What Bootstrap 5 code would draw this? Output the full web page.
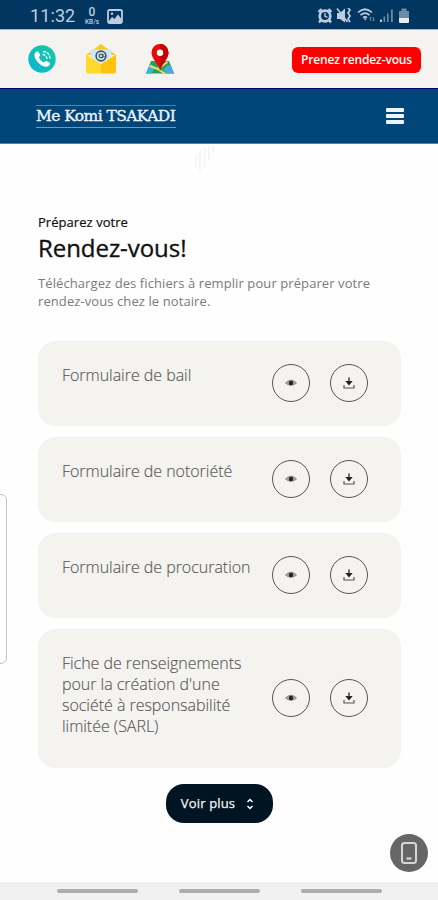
<!DOCTYPE html>
<html lang="fr">
<head>
<meta charset="utf-8">
<meta name="viewport" content="width=device-width, initial-scale=1">
<title>Me Komi TSAKADI</title>
<link href="https://cdn.jsdelivr.net/npm/bootstrap@5.3.0/dist/css/bootstrap.min.css" rel="stylesheet">
<style>
body{font-family:"Open Sans","Noto Sans",sans-serif;height:900px;overflow:hidden;background:#fefefe;color:#111}
svg{display:block;flex:none}
.status-strip{height:29px;background:#00365f;color:#bfcde0;font-family:Roboto,sans-serif;padding:3px 28px 0 30px}
.clock{font-size:18px;line-height:24px;width:46px;letter-spacing:.1px;white-space:nowrap}
.speed{font-size:12px;line-height:12px;width:18px;margin-left:7px;font-weight:500}
.speed span{display:block;font-size:6.5px;line-height:8px}
.contact-strip{height:59px;background:#f4f3f0;padding:0 17px 0 28px;border-top:1px solid #a9b4bf}
.btn-rdv{background:#fe0000;color:#fff;width:129px;height:26px;border-radius:6px;font-size:12px;font-weight:600;line-height:26px;letter-spacing:-.15px;margin-top:1px}
.brand-strip{height:56px;background:#004679;border-top:1px solid #000070;border-bottom:1px solid #55809f;padding:0 34px 0 36px}
.brand-name{font-family:"DejaVu Serif","Liberation Serif",serif;font-size:15.5px;line-height:21px;height:23px;width:140px;color:#eff4fc;border-top:1px solid #547fa6;border-bottom:1px solid #7395b6;white-space:nowrap;letter-spacing:-.58px;-webkit-text-stroke:.35px #eff4fc}
.burger{width:18px}
.burger span{display:block;height:4px;background:#eef3f8;border-radius:1px;margin-bottom:2px}
.content{padding:68px 37px 0 38px}
.pre{font-size:13px;line-height:20px;-webkit-text-stroke:.2px #111;letter-spacing:.05px}
.headline{font-size:24px;line-height:32px;font-weight:500;letter-spacing:-.05px;-webkit-text-stroke:.35px #111}
.intro{font-size:13px;line-height:18px;color:#7a7a7a;margin-top:10px;white-space:nowrap;letter-spacing:.09px}
.files{margin-top:31px;gap:11px}
.file-item{min-height:85px;border-radius:18px;background:#f4f3f0;padding:23px 33px 24px 24px}
.file-tall{min-height:139px}
.file-name{font-size:16px;line-height:21px;color:#555;font-weight:300;white-space:nowrap;padding-top:1px;letter-spacing:-.03px;-webkit-text-stroke:.15px #666}
.rounded-btn{width:38px;height:38px;border:1px solid #555;background:transparent}
.btn-more{width:107px;height:39px;border-radius:18px;background:#001421;color:#f1f4f6;font-size:13px;letter-spacing:.15px;-webkit-text-stroke:.25px #f1f4f6;margin:16px auto 0;gap:11px}
.edge-handle{left:-6px;top:494px;width:13px;height:170px;border:1px solid #c4c4c4;border-radius:6px}
.device-btn{left:390px;top:834px;width:38px;height:38px;background:#666}
.nav-strip{height:18px;background:#f1f1f1;gap:41px;padding:0}
.nav-strip span{width:81px;height:4px;border-radius:2px;background:#adadad}
.streaks{left:194px;top:145px}
</style>
</head>
<body class="position-relative d-flex flex-column">
<svg width="0" height="0" class="position-absolute">
<symbol id="eye" viewBox="0 0 12 10"><path d="M.5 5Q6-.6 11.5 5 6 9.6.5 5Z" fill="#aaa" stroke="#777" stroke-width=".8"/><circle cx="6" cy="5" r="2.200" fill="#222"/></symbol>
<symbol id="down" viewBox="0 0 12 12"><path d="M1 8v3h10V8" fill="none" stroke="#555" stroke-width="1.200"/><path d="M6 .5v4.500" stroke="#555" stroke-width="1.700"/><path d="M2.300 4h7.400L6 8.600Z" fill="#222"/></symbol>
</svg>
<header>
<div class="status-strip d-flex align-items-center">
<span class="clock">11:32</span>
<div class="speed text-center">0<span>KB/s</span></div>
<svg width="16" height="15" viewBox="0 0 16 15" style="margin-left:6px"><rect x="1" y="1" width="14" height="13" rx="1.500" fill="none" stroke="#bfcde0" stroke-width="1.800"/><circle cx="5" cy="4.800" r="1.200" fill="#bfcde0"/><path d="M2 12l3-4 2.500 2L11 5.500l3 4V13H2Z" fill="#bfcde0"/></svg>
<div class="ms-auto d-flex align-items-center">
<svg width="93" height="17" viewBox="317 8 93 17">
<g fill="none" stroke="#bfcde0"><circle cx="325" cy="16" r="5.300" stroke-width="2.700"/><path d="M325 13v3.300l2.500 1" stroke-width="1.400"/><path d="M318.500 12l3-3M331.500 12l-3-3M321 20l-2 2.500M329 20l2 2.500" stroke-width="2.400"/></g>
<path d="M337 13h3l5-4.500v14L340 19h-3Z" fill="#bfcde0"/><path d="M337 8.500l10.500 13.500" stroke="#bfcde0" stroke-width="1.600"/><path d="M348 8l2 2-2 3 2 3-2 3 2 3" fill="none" stroke="#bfcde0" stroke-width="1.700"/>
<g fill="none" stroke="#bfcde0" stroke-width="1.700"><path d="M358 12.500q7-6.500 14 0M360.500 15.200q4.500-4 9 0M363 17.600q2-1.500 4 0"/></g><path d="M363.500 18.500h3.500l-1.700 2Z" fill="#bfcde0"/><path d="M370.500 21v-4m-1.200 1.300L370.500 17l1.200 1.300M373.500 17v4m-1.200-1.300 1.200 1.300 1.200-1.300" fill="none" stroke="#7891aa" stroke-width=".8"/>
<g fill="#6f8aa6"><path d="M380 19.500h2V22h-2Z" fill="#bfcde0"/><path d="M383.500 16.500h1.600V22h-1.600ZM387 13.500h1.600V22H387ZM391 9.500h1.800V22H391Z"/></g>
<path d="M399 11h2.500V8.500h5V11h2.500v7h-10Z" fill="#6f8aa6"/><path d="M399 18h10v4q0 1-1 1h-8q-1 0-1-1Z" fill="#e4ebf2"/>
</svg>
</div>
</div>
<div class="contact-strip d-flex align-items-center">
<svg width="28" height="28" viewBox="0 0 28 28"><defs><linearGradient id="teal" x1="0" y1="1" x2="1" y2="0"><stop stop-color="#08b5d4"/><stop offset="1" stop-color="#15c9a0"/></linearGradient></defs><circle cx="14" cy="14" r="13.700" fill="url(#teal)"/><path d="M7.500 7.500c1.500-1.700 2.500-1.500 3.300 0l1.200 2c.6 1.100-.8 2-1 3 .9 2.300 2.500 3.900 4.700 4.700 1.200-.2 1.900-1.700 3-1.100l2.500 1.500c1.500.9.900 2.100-.3 3.200-2.200 2-6.300.8-9.700-2.300-3.700-3.500-6.200-8.400-3.700-11Z" fill="#fff"/><path d="M14.500 9.500q4 0 4.500 4.500M15 6.500q6.500.5 7 7" fill="none" stroke="#d9fff6" stroke-width="1.500" stroke-dasharray="3 1"/></svg>
<svg width="30" height="30" viewBox="0 0 30 30" style="margin-left:30px"><path d="M0 11L15 0l15 11Z" fill="#ffc91b"/><path d="M0 10.500l15 9.500v9.500H2q-2 0-2-2Z" fill="#ffd92e"/><path d="M30 10.500L15 20v9.500h13q2 0 2-2Z" fill="#ffc20e"/><path d="M4.500 5.500h21V13L15 19.500 4.500 13Z" fill="#cfe7f0"/><circle cx="15" cy="12" r="4.900" fill="none" stroke="#405767" stroke-width="1.600"/><circle cx="15" cy="12" r="1.800" fill="none" stroke="#405767" stroke-width="1.300"/><path d="M17 10v2.500q1 1.500 2 0" fill="none" stroke="#405767"/></svg>
<svg width="28" height="30" viewBox="0 0 28 30" style="margin-left:30px"><path d="M5 17h18l5 12.500H0Z" fill="#23a35a"/><path d="M4 20l6 3-5 6.500H0Z" fill="#3bb4dd"/><path d="M22 21l3 1 3 7.500h-7l-4-4Z" fill="#4ba8df"/><path d="M3.500 22l8 3 10-7M10 24l9 5.500" fill="none" stroke="#f3dc60" stroke-width="2"/><path d="M14 27C13 20 5.500 15.500 5.500 8.500a8.500 8.500 0 0 1 17 0C22.500 15.500 15 20 14 27Z" fill="#e30b0b"/><path d="M14 0a8.500 8.500 0 0 1 8.500 8.500C22.500 15.500 15 20 14 27Z" fill="#c90008"/><circle cx="14" cy="8.700" r="3.200" fill="#fff"/></svg>
<button class="btn btn-rdv p-0 ms-auto border-0">Prenez rendez-vous</button>
</div>
<nav class="brand-strip d-flex align-items-center justify-content-between">
<div class="brand-name">Me Komi TSAKADI</div>
<div class="burger"><span></span><span></span><span class="mb-0"></span></div>
</nav>
</header>
<main class="content flex-grow-1">
<div class="pre">Préparez votre</div>
<h1 class="headline mb-0">Rendez-vous!</h1>
<p class="intro mb-0">Téléchargez des fichiers à remplir pour préparer votre<br>rendez-vous chez le notaire.</p>
<div class="files d-flex flex-column">
<div class="file-item d-flex justify-content-between"><div class="file-name">Formulaire de bail</div><div class="d-flex align-items-center align-self-center"><button class="rounded-btn rounded-circle d-flex align-items-center justify-content-center p-0 me-3"><svg width="12" height="10"><use href="#eye"/></svg></button><button class="rounded-btn rounded-circle d-flex align-items-center justify-content-center p-0 ms-1"><svg width="12" height="12"><use href="#down"/></svg></button></div></div>
<div class="file-item d-flex justify-content-between"><div class="file-name">Formulaire de notoriété</div><div class="d-flex align-items-center align-self-center"><button class="rounded-btn rounded-circle d-flex align-items-center justify-content-center p-0 me-3"><svg width="12" height="10"><use href="#eye"/></svg></button><button class="rounded-btn rounded-circle d-flex align-items-center justify-content-center p-0 ms-1"><svg width="12" height="12"><use href="#down"/></svg></button></div></div>
<div class="file-item d-flex justify-content-between"><div class="file-name">Formulaire de procuration</div><div class="d-flex align-items-center align-self-center"><button class="rounded-btn rounded-circle d-flex align-items-center justify-content-center p-0 me-3"><svg width="12" height="10"><use href="#eye"/></svg></button><button class="rounded-btn rounded-circle d-flex align-items-center justify-content-center p-0 ms-1"><svg width="12" height="12"><use href="#down"/></svg></button></div></div>
<div class="file-item file-tall d-flex justify-content-between"><div class="file-name">Fiche de renseignements<br>pour la création d'une<br>société à responsabilité<br>limitée (SARL)</div><div class="d-flex align-items-center align-self-center"><button class="rounded-btn rounded-circle d-flex align-items-center justify-content-center p-0 me-3"><svg width="12" height="10"><use href="#eye"/></svg></button><button class="rounded-btn rounded-circle d-flex align-items-center justify-content-center p-0 ms-1"><svg width="12" height="12"><use href="#down"/></svg></button></div></div>
</div>
<button class="btn btn-more border-0 py-0 ps-0 pe-1 d-flex align-items-center justify-content-center">Voir plus<svg width="8" height="12" viewBox="0 0 8 12"><path d="M1.500 4L4 1.500 6.500 4M1.500 8L4 10.500 6.500 8" fill="none" stroke="#fff" stroke-width="1.500"/></svg></button>
</main>
<footer class="nav-strip d-flex align-items-center justify-content-center"><span></span><span></span><span></span></footer>
<svg class="streaks position-absolute" width="22" height="28" viewBox="0 0 22 28"><path d="M2 10v12M6 5v21M10.500 2v20M15 1v15M19 1v7" stroke="#f5f5f5" stroke-width="2"/></svg>
<div class="edge-handle position-absolute"></div>
<button class="device-btn position-absolute rounded-circle border-0 p-0 d-flex align-items-center justify-content-center"><svg width="16" height="22" viewBox="0 0 16 22"><rect x="1" y="1" width="14" height="20" rx="2.500" fill="none" stroke="#d6d6d6" stroke-width="2"/><path d="M5.500 16.500h5" stroke="#e0e0e0" stroke-width="2"/></svg></button>
<script src="https://cdn.jsdelivr.net/npm/bootstrap@5.3.0/dist/js/bootstrap.bundle.min.js"></script>
</body>
</html>
